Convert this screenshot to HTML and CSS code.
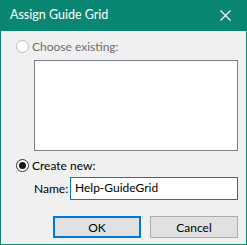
FILE: index.html
```html
<!DOCTYPE html>
<html lang="en">
<head>
<meta charset="UTF-8" />
<title>Assign Guide Grid</title>
<link rel="stylesheet" href="styles.css">
</head>
<body>
<div class="dialog" role="dialog" aria-label="Assign Guide Grid">
  <div class="titlebar">
    <span class="title">Assign Guide Grid</span>
    <button class="close" type="button" aria-label="Close">
      <svg width="11" height="11" viewBox="0 0 11 11"><path d="M0.5 0.5 L10.5 10.5 M10.5 0.5 L0.5 10.5" stroke="#fff" stroke-width="1.1" fill="none"/></svg>
    </button>
  </div>
  <div class="content">
    <label class="radio disabled">
      <span class="dot"></span>
      <span>Choose existing:</span>
    </label>
    <div class="listbox"></div>

    <label class="radio checked">
      <span class="dot"></span>
      <span>Create new:</span>
    </label>
    <div class="name-row">
      <span class="name-label">Name:</span>
      <div class="textbox">Help-GuideGrid</div>
    </div>

    <div class="button-row">
      <button class="btn default" type="button">OK</button>
      <button class="btn" type="button">Cancel</button>
    </div>
  </div>
</div>
</body>
</html>
```

FILE: styles.css
```css
* {
  box-sizing: border-box;
}
html, body {
  margin: 0;
  padding: 0;
  background: #f0f0f0;
  font-family: 'Lato', 'Noto Sans', sans-serif;
  font-size: 12px;
  color: #000;
}

.dialog {
  width: 247px;
  height: 245px;
  border: 1px solid #0a8772;
  border-top: 0;
  background: #f0f0f0;
  display: flex;
  flex-direction: column;
}

/* Title bar */
.titlebar {
  height: 31px;
  margin: 0 -1px;
  background: #0a8772;
  display: flex;
  align-items: center;
  padding-left: 10px;
  color: #fff;
}
.title {
  flex: 1;
  font-size: 12.5px;
  line-height: 16px;
  margin-top: -1px;
}
.close {
  width: 46px;
  height: 31px;
  border: 0;
  background: transparent;
  padding: 0;
  display: flex;
  align-items: center;
  justify-content: center;
  margin-right: -1px;
}
.close svg {
  display: block;
  margin-top: -1px;
}

/* Body */
.content {
  flex: 1;
  display: flex;
  flex-direction: column;
  padding: 9px 8px 0 15px;
}

.radio {
  display: flex;
  align-items: center;
  gap: 3px;
  height: 13px;
  line-height: 13px;
}
.radio .dot {
  width: 13px;
  height: 13px;
  border-radius: 50%;
  border: 1px solid #333;
  background: #fff;
  position: relative;
}
.radio.disabled {
  color: #6d6d6d;
}
.radio.disabled .dot {
  border-color: #bcbcbc;
}
.radio.checked .dot::after {
  content: "";
  position: absolute;
  left: 2px;
  top: 2px;
  width: 7px;
  height: 7px;
  border-radius: 50%;
  background: #1a1a1a;
}

.listbox {
  margin: 7px 0 0 18px;
  height: 91px;
  background: #fff;
  border: 1px solid #7a7f87;
}

.radio.checked {
  margin-top: 8px;
}

.name-row {
  display: flex;
  align-items: center;
  margin: 5px 0 0 18px;
}
.name-label {
  width: 36px;
  white-space: nowrap;
}
.textbox {
  flex: 1;
  height: 23px;
  background: #fff;
  border: 1px solid #0078d7;
  padding-left: 4px;
  line-height: 20px;
}

.button-row {
  display: flex;
  justify-content: flex-end;
  gap: 9px;
  margin-top: 16px;
}
.btn {
  width: 88px;
  height: 22px;
  background: #e1e1e1;
  border: 1px solid #adadad;
  font-family: inherit;
  font-size: inherit;
  color: #000;
  padding: 0;
}
.btn.default {
  border: 2px solid #0078d7;
}
```
